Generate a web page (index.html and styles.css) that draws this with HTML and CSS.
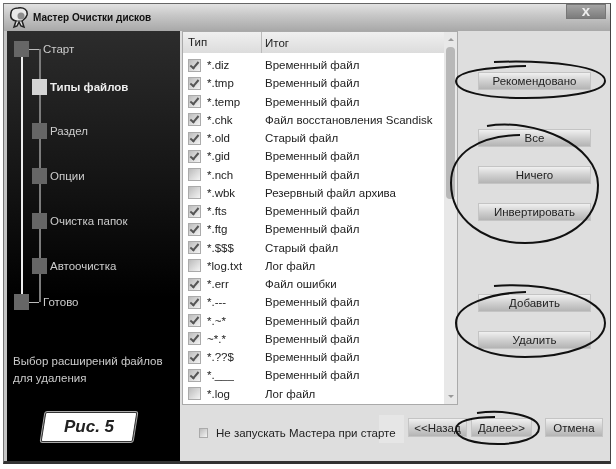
FILE: index.html
```html
<!DOCTYPE html>
<html>
<head>
  <title>Мастер Очистки дисков</title>
  <link rel="stylesheet" href="styles.css">
</head>
<body>
  <div class="window">

    <!-- Title bar -->
    <div class="titlebar">
      <svg class="app-icon" width="20" height="22" viewBox="0 0 20 22">
        <path d="M9 1 C15 0 19 3 18 8 C17 12 14 13 13 14 L15 20 L12 19 L10 15 L8 19 L5 20 L7 14 C3 13 1 10 2 6 C2 3 5 1 9 1 Z" fill="#e8e8e8" stroke="#222" stroke-width="1.5"/>
        <circle cx="12" cy="9" r="3.5" fill="#8c8c8c"/>
        <path d="M7 14 L13 14" stroke="#444"/>
      </svg>
      <span class="title">Мастер Очистки дисков</span>
      <div class="close-btn">x</div>
    </div>

    <div class="content">

      <!-- Wizard steps -->
      <div class="sidebar">
        <div class="steps">
          <div class="line-white"></div>
          <div class="line-gray"></div>
          <div class="step outer first"><i class="node"></i><span>Старт</span></div>
          <div class="step active"><i class="node"></i><span>Типы файлов</span></div>
          <div class="step"><i class="node"></i><span>Раздел</span></div>
          <div class="step"><i class="node"></i><span>Опции</span></div>
          <div class="step"><i class="node"></i><span>Очистка папок</span></div>
          <div class="step"><i class="node"></i><span>Автоочистка</span></div>
          <div class="step outer last"><i class="node"></i><span>Готово</span></div>
        </div>
        <p class="hint">Выбор расширений файлов<br>для удаления</p>
        <div class="fig"><b>Рис. 5</b></div>
      </div>

      <div class="main">
        <div class="top">

          <!-- File type list -->
          <div class="list">
            <div class="rows">
              <div class="row head"><span class="col-type">Тип</span><span class="col-sum">Итог</span></div>
              <div class="row"><i class="box on"></i><span class="ext">*.diz</span><span>Временный файл</span></div>
              <div class="row"><i class="box on"></i><span class="ext">*.tmp</span><span>Временный файл</span></div>
              <div class="row"><i class="box on"></i><span class="ext">*.temp</span><span>Временный файл</span></div>
              <div class="row"><i class="box on"></i><span class="ext">*.chk</span><span>Файл восстановления Scandisk</span></div>
              <div class="row"><i class="box on"></i><span class="ext">*.old</span><span>Старый файл</span></div>
              <div class="row"><i class="box on"></i><span class="ext">*.gid</span><span>Временный файл</span></div>
              <div class="row"><i class="box"></i><span class="ext">*.nch</span><span>Временный файл</span></div>
              <div class="row"><i class="box"></i><span class="ext">*.wbk</span><span>Резервный файл архива</span></div>
              <div class="row"><i class="box on"></i><span class="ext">*.fts</span><span>Временный файл</span></div>
              <div class="row"><i class="box on"></i><span class="ext">*.ftg</span><span>Временный файл</span></div>
              <div class="row"><i class="box on"></i><span class="ext">*.$$$</span><span>Старый файл</span></div>
              <div class="row"><i class="box"></i><span class="ext">*log.txt</span><span>Лог файл</span></div>
              <div class="row"><i class="box on"></i><span class="ext">*.err</span><span>Файл ошибки</span></div>
              <div class="row"><i class="box on"></i><span class="ext">*.---</span><span>Временный файл</span></div>
              <div class="row"><i class="box on"></i><span class="ext">*.~*</span><span>Временный файл</span></div>
              <div class="row"><i class="box on"></i><span class="ext">~*.*</span><span>Временный файл</span></div>
              <div class="row"><i class="box on"></i><span class="ext">*.??$</span><span>Временный файл</span></div>
              <div class="row"><i class="box on"></i><span class="ext">*.___</span><span>Временный файл</span></div>
              <div class="row"><i class="box"></i><span class="ext">*.log</span><span>Лог файл</span></div>
            </div>
            <div class="scrollbar">
              <i class="arrow up"></i>
              <div class="thumb"></div>
              <i class="arrow down"></i>
            </div>
          </div>

          <!-- Action buttons -->
          <div class="actions">
            <button class="btn recommend">Рекомендовано</button>
            <button class="btn all">Все</button>
            <button class="btn">Ничего</button>
            <button class="btn">Инвертировать</button>
            <button class="btn add">Добавить</button>
            <button class="btn">Удалить</button>
          </div>
        </div>

        <!-- Footer -->
        <div class="footer">
          <i class="box small"></i>
          <span class="startup">Не запускать Мастера при старте</span>
          <button class="btn nav back">&lt;&lt;Назад</button>
          <button class="btn nav next">Далее&gt;&gt;</button>
          <button class="btn nav cancel">Отмена</button>
        </div>
      </div>
    </div>
  </div>

  <!-- Hand drawn marks over the screenshot -->
  <svg class="marks" width="616" height="469" viewBox="0 0 616 469">
    <path d="M494 62 C550 60 605 66 605 81 C605 93 560 98 525 98 C485 98 456 92 456 81 C456 71 490 67 526 66"/>
    <path d="M487 126 C535 118 598 145 598 185 C598 222 565 243 525 243 C485 243 451 220 451 183 C451 152 480 136 520 135"/>
    <path d="M494 286 C550 282 605 298 605 323 C605 345 565 357 525 357 C485 357 456 342 456 323 C456 305 490 293 526 292"/>
    <path d="M477 413 C505 409 539 416 539 428 C539 438 520 444 498 444 C475 444 456 439 456 429 C456 421 472 417 495 417"/>
  </svg>
</body>
</html>
```

FILE: styles.css
```css
body {
  margin: 0;
  background: #fff;
  font-family: "Liberation Sans", Arial, sans-serif;
  font-size: 11.5px;
  color: #222;
}
.window {
  box-sizing: border-box;
  width: 608px;
  height: 461px;
  margin: 3px 0 0 3px;
  display: flex;
  flex-direction: column;
  background: #c4c4c4;
  border-top: 1px solid #666;
  border-left: 1px solid #777;
  border-right: 1px solid #444;
  border-bottom: 3px solid #333;
  filter: blur(0.35px);
}

/* title bar */
.titlebar {
  height: 27px;
  display: flex;
  align-items: center;
  padding-left: 5px;
  background: linear-gradient(#e2e2e2, #c8c8c8 40%, #a8a8a8);
}
.app-icon {
  margin-right: 4px;
}
.title {
  font-weight: bold;
  font-size: 10px;
  color: #111;
}
.close-btn {
  width: 40px;
  height: 15px;
  margin: -12px 4px 0 auto;
  text-align: center;
  line-height: 12px;
  font-size: 15px;
  font-weight: bold;
  color: #eee;
  background: linear-gradient(#a4a4a4, #7c7c7c);
  border: 1px solid #777;
  box-sizing: border-box;
}

.content {
  flex: 1;
  display: flex;
  padding-left: 3px;
  min-height: 0;
}

/* left panel */
.sidebar {
  width: 173px;
  background: linear-gradient(#2c2c2c, #141414 35%, #000 62%);
  color: #ccc;
  display: flex;
  flex-direction: column;
}
.steps {
  position: relative;
  height: 284px;
  padding-top: 6px;
}
.line-white {
  position: absolute;
  left: 14px;
  top: 20px;
  width: 2px;
  height: 250px;
  background: #eee;
}
.line-gray {
  position: absolute;
  left: 32px;
  top: 18px;
  width: 2px;
  height: 253px;
  background: #7c7c7c;
}
.step {
  position: relative;
  height: 45px;
  display: flex;
  align-items: center;
  padding-left: 25px;
  font-size: 11.5px;
}
.node {
  width: 15px;
  height: 16px;
  background: #666;
  margin-right: 3px;
}
.step.outer {
  height: 37px;
  padding-left: 7px;
}
.step.outer .node {
  margin-right: 14px;
}
.step.outer .node::after {
  content: "";
  display: block;
  width: 10px;
  height: 1px;
  margin: 8px 0 0 15px;
  background: #bbb;
}
.step.first {
  height: 24px;
  margin-bottom: 7px;
}
.step.last {
  height: 24px;
  margin-top: 2px;
}
.step.active {
  height: 37px;
  margin-bottom: 3px;
  font-weight: bold;
  color: #eee;
}
.step.active .node {
  background: #d4d4d4;
}
.hint {
  margin: 32px 0 0 6px;
  font-size: 11.5px;
  line-height: 17px;
}
.fig {
  box-sizing: border-box;
  width: 92px;
  height: 30px;
  margin: 25px 0 0 36px;
  transform: skewX(-9deg);
  background: #fff;
  border: 1px solid #333;
  outline: 1px solid #aaa;
  border-radius: 2px;
  text-align: center;
  line-height: 28px;
  color: #222;
}
.fig b {
  display: block;
  transform: skewX(9deg);
  font-size: 17px;
  font-style: italic;
}

/* right part */
.main {
  flex: 1;
  display: flex;
  flex-direction: column;
  background: #dedede;
  min-width: 0;
}
.top {
  height: 374px;
  display: flex;
}
.list {
  width: 276px;
  margin-left: 2px;
  display: flex;
  background: #fff;
  border: 1px solid #aaa;
  box-sizing: border-box;
}
.rows {
  flex: 1;
}
.row {
  height: 18.25px;
  display: flex;
  align-items: center;
  padding-left: 5px;
}
.row.head {
  height: 21px;
  padding: 0;
  margin-bottom: 3px;
  background: linear-gradient(#f0f0f0, #dcdcdc);
}
.col-type {
  width: 79px;
  padding-left: 5px;
  box-sizing: border-box;
  border-right: 1px solid #bbb;
  line-height: 21px;
}
.col-sum {
  padding-left: 3px;
}
.ext {
  width: 58px;
  margin-left: 6px;
}
.box {
  box-sizing: border-box;
  width: 13px;
  height: 13px;
  background: linear-gradient(135deg, #bbb, #f4f4f4);
  border: 1px solid #aaa;
  position: relative;
  display: block;
  flex: none;
}
.box.on::after {
  content: "";
  position: absolute;
  left: 3px;
  top: 0;
  width: 3px;
  height: 7px;
  border: solid #555;
  border-width: 0 2px 2px 0;
  transform: rotate(40deg);
}
.box.small {
  width: 9px;
  height: 10px;
  margin: 0 8px 0 19px;
}
.scrollbar {
  width: 13px;
  display: flex;
  flex-direction: column;
  align-items: center;
  background: #e8e8e8;
}
.thumb {
  width: 9px;
  height: 152px;
  margin-top: 6px;
  background: #b8b8b8;
  border-radius: 4px;
}
.arrow {
  width: 0;
  height: 0;
  border: 3px solid transparent;
}
.arrow.up {
  margin-top: 3px;
  border-bottom-color: #999;
}
.arrow.down {
  margin-top: auto;
  margin-bottom: 3px;
  border-top-color: #999;
}
.actions {
  flex: 1;
  display: flex;
  flex-direction: column;
  align-items: flex-start;
  padding-left: 20px;
}
.btn {
  width: 113px;
  height: 18px;
  margin: 0 0 19px;
  padding: 0;
  font-family: inherit;
  font-size: 11.5px;
  color: #222;
  background: linear-gradient(#f0f0f0, #d0d0d0 50%, #b4b4b4);
  border: 1px solid #c4c4c4;
  box-sizing: border-box;
}
.recommend {
  margin-top: 41px;
  margin-bottom: 39px;
}
.add {
  margin-top: 54px;
}

/* bottom row */
.footer {
  flex: 1;
  display: flex;
  align-items: flex-start;
  padding-top: 13px;
}
.footer .box {
  margin-top: 10px;
}
.startup {
  position: relative;
  z-index: 0;
  margin-top: 9px;
}
.startup::before {
  content: "";
  position: absolute;
  z-index: -1;
  right: -8px;
  top: -12px;
  width: 25px;
  height: 28px;
  background: #e6e6e6;
}
.nav {
  height: 19px;
  margin: 0;
}
.back {
  width: 59px;
  margin-left: auto;
}
.next {
  width: 61px;
  margin-left: 4px;
}
.cancel {
  width: 58px;
  margin: 0 7px 0 13px;
}

.marks {
  position: absolute;
  left: 0;
  top: 0;
  pointer-events: none;
}
.marks path {
  fill: none;
  stroke: #111;
  stroke-width: 2;
}
```
